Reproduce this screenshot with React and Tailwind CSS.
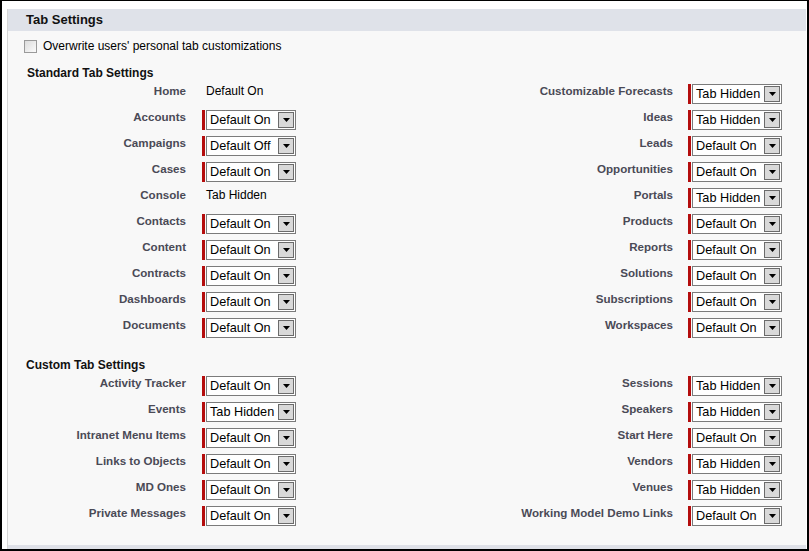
import React from 'react';

const standardLeft = [
  { label: 'Home', value: 'Default On', plain: true },
  { label: 'Accounts', value: 'Default On' },
  { label: 'Campaigns', value: 'Default Off' },
  { label: 'Cases', value: 'Default On' },
  { label: 'Console', value: 'Tab Hidden', plain: true },
  { label: 'Contacts', value: 'Default On' },
  { label: 'Content', value: 'Default On' },
  { label: 'Contracts', value: 'Default On' },
  { label: 'Dashboards', value: 'Default On' },
  { label: 'Documents', value: 'Default On' },
];

const standardRight = [
  { label: 'Customizable Forecasts', value: 'Tab Hidden' },
  { label: 'Ideas', value: 'Tab Hidden' },
  { label: 'Leads', value: 'Default On' },
  { label: 'Opportunities', value: 'Default On' },
  { label: 'Portals', value: 'Tab Hidden' },
  { label: 'Products', value: 'Default On' },
  { label: 'Reports', value: 'Default On' },
  { label: 'Solutions', value: 'Default On' },
  { label: 'Subscriptions', value: 'Default On' },
  { label: 'Workspaces', value: 'Default On' },
];

const customLeft = [
  { label: 'Activity Tracker', value: 'Default On' },
  { label: 'Events', value: 'Tab Hidden' },
  { label: 'Intranet Menu Items', value: 'Default On' },
  { label: 'Links to Objects', value: 'Default On' },
  { label: 'MD Ones', value: 'Default On' },
  { label: 'Private Messages', value: 'Default On' },
];

const customRight = [
  { label: 'Sessions', value: 'Tab Hidden' },
  { label: 'Speakers', value: 'Tab Hidden' },
  { label: 'Start Here', value: 'Default On' },
  { label: 'Vendors', value: 'Tab Hidden' },
  { label: 'Venues', value: 'Tab Hidden' },
  { label: 'Working Model Demo Links', value: 'Default On' },
];

function Picklist({ value }) {
  return (
    <div className="flex h-[20px] items-stretch">
      <div className="w-[3px] bg-[#b40d0d]" />
      <div className="ml-[1px] flex w-[90px] items-center border border-[#7b7b7b] bg-white pl-[3px] pr-[1px]">
        <span className="flex-1 whitespace-nowrap text-[12.7px] leading-none text-black">{value}</span>
        <span className="flex h-[16px] w-[16px] items-center justify-center border border-[#6b6b6b] bg-[#d9d9d9]">
          <svg width="7" height="4" viewBox="0 0 7 4">
            <path d="M0 0h7L3.5 4z" fill="#000" />
          </svg>
        </span>
      </div>
    </div>
  );
}

function Row({ item, labelWidth, gap }) {
  return (
    <div className="flex h-[26px] items-start">
      <div
        className={`${labelWidth} whitespace-nowrap text-right text-[11.6px] font-bold leading-[14px] text-[#4a4a56]`}
      >
        {item.label}
      </div>
      <div className={gap}>
        {item.plain ? (
          <div className="pl-[4px] text-[12px] leading-[14px] text-black">{item.value}</div>
        ) : (
          <Picklist value={item.value} />
        )}
      </div>
    </div>
  );
}

function Section({ left, right }) {
  return (
    <div className="flex">
      <div className="w-[478px]">
        {left.map((item) => (
          <Row key={item.label} item={item} labelWidth="w-[178px]" gap="ml-[16px]" />
        ))}
      </div>
      <div className="flex-1">
        {right.map((item) => (
          <Row key={item.label} item={item} labelWidth="w-[187px]" gap="ml-[15px]" />
        ))}
      </div>
    </div>
  );
}

export default function App() {
  return (
    <div
      className="h-[551px] w-[809px] overflow-hidden border-x-2 border-t border-b-2 border-black bg-white pl-[5px] pr-[1px] pt-[8px]"
      style={{ fontFamily: '"Liberation Sans", Arial, sans-serif' }}
    >
      <div className="flex h-full flex-col border-l border-[#d6d6d6] bg-[#f8f8f8]">
        <div className="h-[22px] bg-[#dfe2e9] pl-[18px] text-[13px] font-bold leading-[22px] text-[#111]">
          Tab Settings
        </div>
        <div className="flex-1">
          <label className="mt-[8px] flex h-[14px] items-center pl-[16px] text-[12px] text-black">
            <span className="mr-[6px] h-[13px] w-[13px] border border-[#9a9a9a] bg-gradient-to-br from-[#dcdcdc] to-[#fbfbfb]" />
            Overwrite users' personal tab customizations
          </label>
          <div className="mt-[13px] mb-[4px] pl-[19px] text-[12px] font-bold leading-[14px] text-[#111]">
            Standard Tab Settings
          </div>
          <Section left={standardLeft} right={standardRight} />
          <div className="mt-[14px] mb-[4px] pl-[18px] text-[12px] font-bold leading-[14px] text-[#111]">
            Custom Tab Settings
          </div>
          <Section left={customLeft} right={customRight} />
        </div>
        <div className="h-[4px] bg-[#dfe1e8]" />
      </div>
    </div>
  );
}
